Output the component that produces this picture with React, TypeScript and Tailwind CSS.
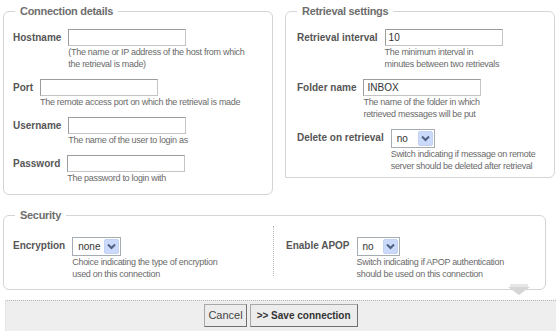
import React from 'react';

const font = "font-['Liberation_Sans',Arial,sans-serif]";

const Help: React.FC<{ lines: string[] }> = ({ lines }) => (
  <p className="whitespace-nowrap text-[9px] leading-[12px] tracking-[-0.3px] text-[#6a6a6a]">
    {lines.map((l, i) => (
      <React.Fragment key={i}>
        {l}
        {i < lines.length - 1 && <br />}
      </React.Fragment>
    ))}
  </p>
);

const Field: React.FC<{ label: string; help: string[]; children: React.ReactNode }> = ({
  label,
  help,
  children,
}) => (
  <div className="flex items-start">
    <span className="mr-[7px] whitespace-nowrap text-[10px] font-bold leading-[18px] text-[#565656]">{label}</span>
    <div className="flex flex-col">
      {children}
      <Help lines={help} />
    </div>
  </div>
);

const TextInput: React.FC<{ value?: string }> = ({ value = '' }) => (
  <div className="flex h-[17px] w-[118px] items-center border border-[#c4c4c4] border-l-[#9c9c9c] border-t-[#9c9c9c] bg-white pl-[3px] text-[10px] text-[#333]">
    {value}
  </div>
);

const Select: React.FC<{ value: string; width: string }> = ({ value, width }) => (
  <div
    className={`flex h-[19px] items-center justify-between border border-[#a5acb2] bg-white pl-[5px] pr-[1px] ${width}`}
  >
    <span className="text-[10px] text-[#333]">{value}</span>
    <span className="flex h-[15px] w-[15px] items-center justify-center rounded-[2px] border border-[#c3d1f2] bg-[#cbd9fb]">
      <svg width="9" height="7" viewBox="0 0 9 7">
        <path d="M1 1.5 L4.5 5 L8 1.5" fill="none" stroke="#4d6185" strokeWidth="2" />
      </svg>
    </span>
  </div>
);

const Legend: React.FC<{ children: React.ReactNode; className?: string }> = ({ children, className = '' }) => (
  <legend
    className={`px-[5px] text-[11px] font-bold leading-[13px] tracking-[-0.3px] text-[#6e6e6e] ${className}`}
  >
    {children}
  </legend>
);

export default function App() {
  return (
    <div className={`${font} h-[331px] w-[558px] overflow-hidden bg-white pt-[5px]`}>
      <div className="flex items-start gap-[12px] pl-[3px]">
        <fieldset className="w-[270px] rounded-[6px] border border-[#d4d4d4] px-[9px] pb-[10px] pt-[11px]">
          <Legend className="ml-[2px]">Connection details</Legend>
          <div className="flex flex-col gap-[9px]">
            <Field label="Hostname" help={['(The name or IP address of the host from which', 'the retrieval is made)']}>
              <TextInput />
            </Field>
            <Field label="Port" help={['The remote access port on which the retrieval is made']}>
              <TextInput />
            </Field>
            <Field label="Username" help={['The name of the user to login as']}>
              <TextInput />
            </Field>
            <Field label="Password" help={['The password to login with']}>
              <TextInput />
            </Field>
          </div>
        </fieldset>

        <fieldset className="w-[270px] rounded-[6px] rounded-bl-none border border-[#d4d4d4] pb-[5px] pl-[11px] pr-[9px] pt-[11px]">
          <Legend>Retrieval settings</Legend>
          <div className="flex flex-col gap-[9px]">
            <Field label="Retrieval interval" help={['The minimum interval in', 'minutes between two retrievals']}>
              <TextInput value="10" />
            </Field>
            <Field label="Folder name" help={['The name of the folder in which', 'retrieved messages will be put']}>
              <TextInput value="INBOX" />
            </Field>
            <Field
              label="Delete on retrieval"
              help={['Switch indicating if message on remote', 'server should be deleted after retrieval']}
            >
              <Select value="no" width="w-[44px]" />
            </Field>
          </div>
        </fieldset>
      </div>

      <fieldset className="relative ml-[3px] mt-[14px] w-[543px] rounded-[6px] border border-[#d4d4d4] pb-[9px] pl-[9px] pt-[4px]">
        <Legend className="ml-[2px]">Security</Legend>
        <div className="flex items-start">
          <div className="w-[260px] pt-[11px]">
            <Field label="Encryption" help={['Choice indicating the type of encryption', 'used on this connection']}>
              <Select value="none" width="w-[49px]" />
            </Field>
          </div>
          <div className="h-[50px] border-l border-dotted border-[#b8b8b8]" />
          <div className="pl-[12px] pt-[11px]">
            <Field label="Enable APOP" help={['Switch indicating if APOP authentication', 'should be used on this connection']}>
              <Select value="no" width="w-[43px]" />
            </Field>
          </div>
        </div>
        <svg className="absolute left-[504px] top-[62px]" width="22" height="12" viewBox="0 0 22 12">
          <rect x="2" y="0" width="18" height="3" fill="#e6e6e6" />
          <polygon points="0,3 22,3 11,11" fill="#d6d6d6" />
        </svg>
      </fieldset>

      <div className="ml-[5px] mt-[10px] flex h-[40px] w-[551px] justify-center gap-[3px] border-l border-t border-dotted border-[#b5b5b5] border-l-[#dcdcdc] bg-[#eeeeee] pt-[3px]">
        <button className="h-[23px] border border-[#a8a8a8] border-b-[#707070] border-r-[#707070] bg-[#ececec] px-[3px] text-[11px] text-[#444]">
          Cancel
        </button>
        <button className="h-[23px] border border-[#a8a8a8] border-b-[#707070] border-r-[#707070] bg-[#ececec] px-[6px] text-[10px] font-bold text-[#333]">
          &gt;&gt; Save connection
        </button>
      </div>
    </div>
  );
}
